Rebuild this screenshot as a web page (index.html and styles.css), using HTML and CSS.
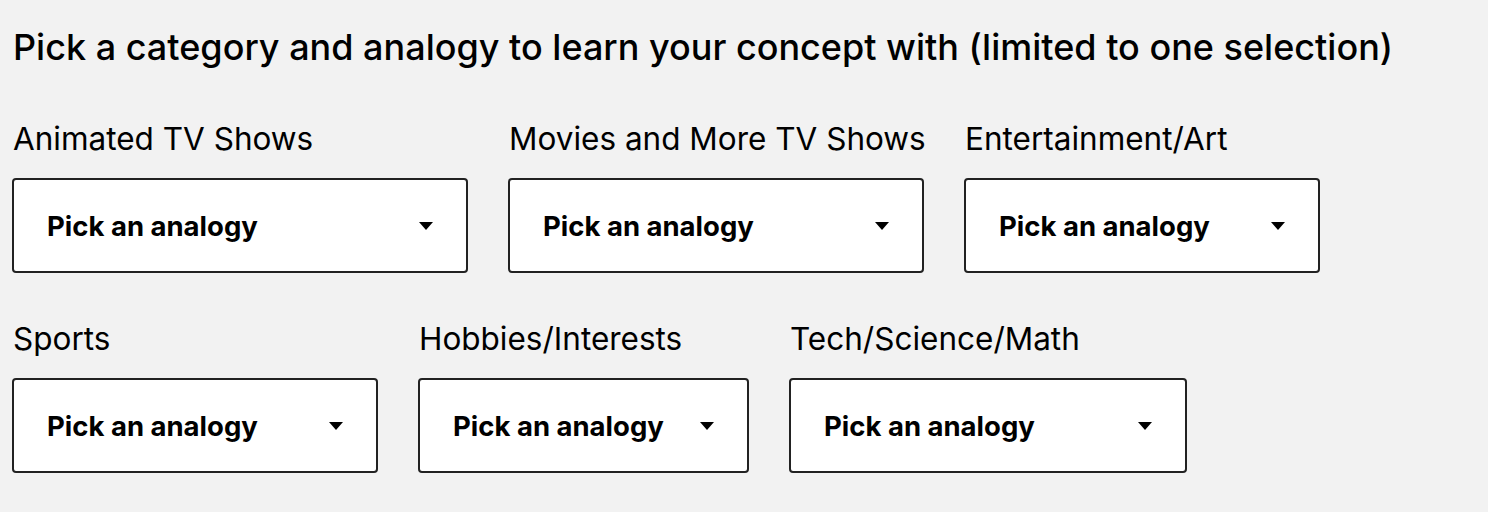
FILE: index.html
```html
<!DOCTYPE html>
<html>
<head>
<meta charset="utf-8">
<link rel="stylesheet" href="styles.css">
</head>
<body>
<h1 class="title">Pick a category and analogy to learn your concept with (limited to one selection)</h1>
<div class="row">
  <div class="field w-animated">
    <div class="label">Animated TV Shows</div>
    <div class="select"><span>Pick an analogy</span><span class="caret"></span></div>
  </div>
  <div class="field w-movies">
    <div class="label">Movies and More TV Shows</div>
    <div class="select"><span>Pick an analogy</span><span class="caret"></span></div>
  </div>
  <div class="field w-ent">
    <div class="label">Entertainment/Art</div>
    <div class="select"><span>Pick an analogy</span><span class="caret"></span></div>
  </div>
</div>
<div class="row">
  <div class="field w-sports">
    <div class="label">Sports</div>
    <div class="select"><span>Pick an analogy</span><span class="caret"></span></div>
  </div>
  <div class="field w-hobbies">
    <div class="label">Hobbies/Interests</div>
    <div class="select"><span>Pick an analogy</span><span class="caret"></span></div>
  </div>
  <div class="field w-tech">
    <div class="label">Tech/Science/Math</div>
    <div class="select"><span>Pick an analogy</span><span class="caret"></span></div>
  </div>
</div>
</body>
</html>
```

FILE: styles.css
```css
html, body {
  margin: 0;
  padding: 0;
  background: #f2f2f2;
}
body {
  padding: 0 12px;
  font-family: Inter, "Liberation Sans", sans-serif;
  color: #000;
}
.title {
  margin: 25px 0 0 1px;
  font-size: 36px;
  font-weight: 500;
  line-height: 44px;
}
.row {
  display: flex;
  gap: 40px;
  margin-top: 51px;
}
.row + .row {
  margin-top: 47px;
}
.field {
  display: flex;
  flex-direction: column;
  gap: 20px;
  flex: none;
}
.label {
  font-size: 31.5px;
  line-height: 38px;
  margin-left: 1px;
  white-space: nowrap;
}
.select {
  box-sizing: border-box;
  width: 100%;
  height: 95px;
  border: 2px solid #222;
  border-radius: 4px;
  background: #fff;
  display: flex;
  align-items: center;
  justify-content: space-between;
  padding: 0 33px;
  font-size: 27.5px;
  font-weight: 700;
}
.caret {
  width: 0;
  height: 0;
  border-left: 7.5px solid transparent;
  border-right: 7.5px solid transparent;
  border-top: 8px solid #000;
}
.w-animated { width: 456px; }
.w-movies { width: 416px; }
.w-ent { width: 356px; }
.w-sports { width: 366px; }
.w-hobbies { width: 331px; }
.w-tech { width: 398px; }
```
